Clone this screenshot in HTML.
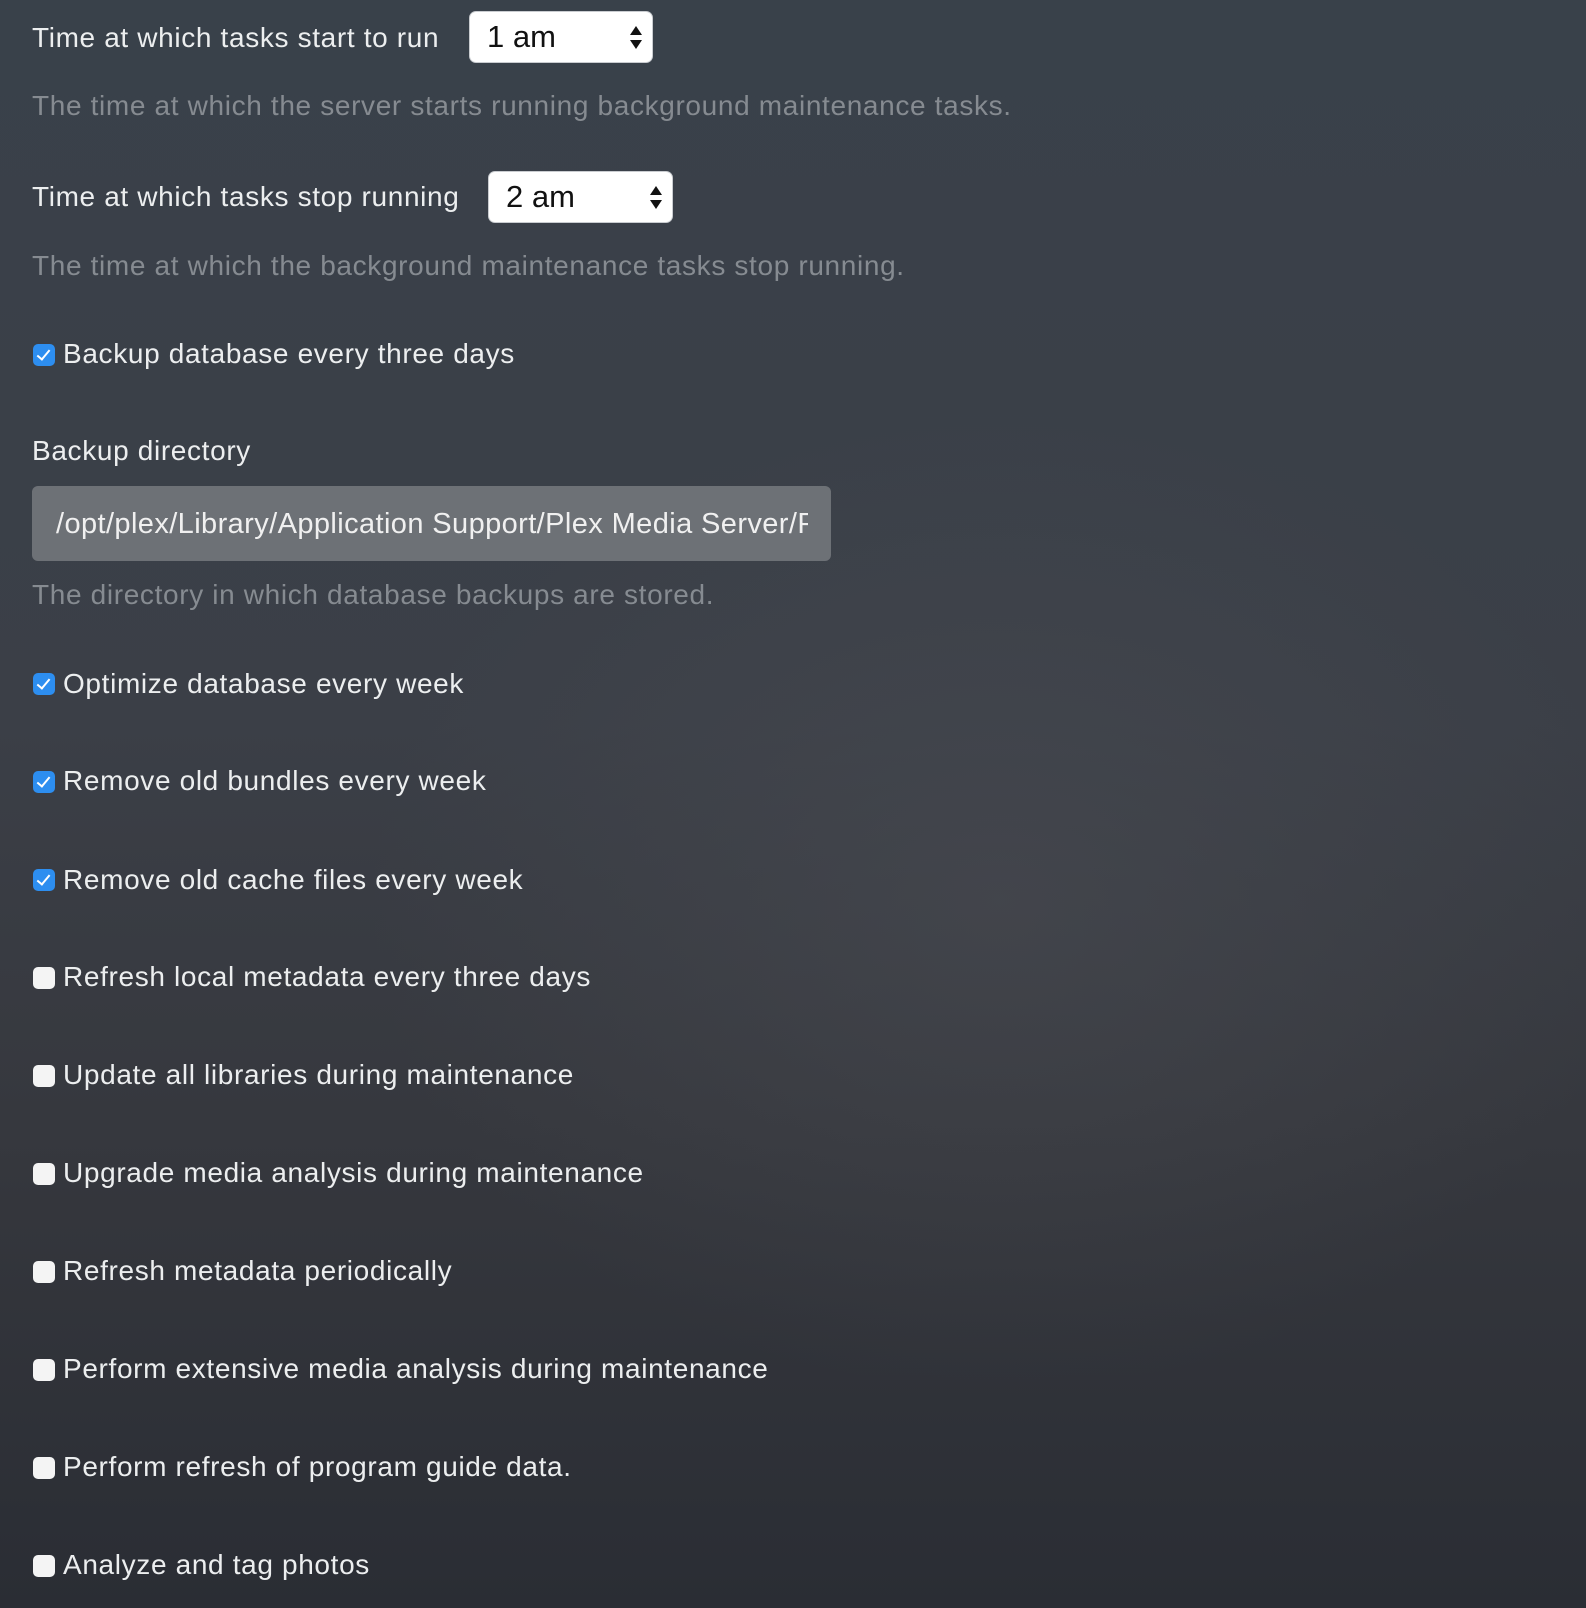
<!DOCTYPE html>
<html><head><meta charset="utf-8"><style>
html,body{margin:0;padding:0}
body{width:1586px;height:1608px;overflow:hidden;position:relative;font-family:"Liberation Sans",sans-serif;
background:radial-gradient(ellipse 900px 700px at 1000px 900px,rgba(80,82,88,0.4),rgba(0,0,0,0) 70%),linear-gradient(180deg,#39414a 0%,#3b3f47 45%,#36383e 70%,#2a2d34 100%);}
.t{position:absolute;left:32px;color:#eceeef;font-size:28px;letter-spacing:0.65px;line-height:30px;white-space:nowrap}
.d{color:#868b91}
.sel{position:absolute;height:52px;background:#fff;border:1px solid #c9ccd0;border-radius:7px;box-sizing:border-box;color:#111;font-size:31px;line-height:50px;padding-left:17px}
.sel:after{content:"";position:absolute;right:10px;top:14px;border:6px solid transparent;border-bottom:9px solid #111;border-top:0}
.sel:before{content:"";position:absolute;right:10px;top:28px;border:6px solid transparent;border-top:9px solid #111;border-bottom:0}
.cb{position:absolute;left:33px;width:22px;height:22px;border-radius:5px;background:#f4f4f4}
.cb.on{background:#2d8ef0}
.cb.on:after{content:"";position:absolute;left:7px;top:3px;width:5px;height:11px;border:solid #fff;border-width:0 2px 2px 0;transform:rotate(40deg)}
.inp{position:absolute;left:32px;top:486px;width:799px;height:75px;background:#6d7176;border-radius:6px}
.inp span{position:absolute;left:24px;top:0;width:752px;overflow:hidden;color:#f0f0f0;font-size:29px;letter-spacing:0.4px;line-height:77px;white-space:nowrap}
</style></head><body>
<div class="t" style="top:23px">Time at which tasks start to run</div>
<div class="sel" style="left:469px;top:11px;width:184px">1 am</div>
<div class="t d" style="top:91px">The time at which the server starts running background maintenance tasks.</div>
<div class="t" style="top:182px">Time at which tasks stop running</div>
<div class="sel" style="left:488px;top:171px;width:185px">2 am</div>
<div class="t d" style="top:251px">The time at which the background maintenance tasks stop running.</div>
<div class="cb on" style="top:344px"></div><div class="t" style="left:63px;top:339px">Backup database every three days</div>
<div class="t" style="top:436px">Backup directory</div>
<div class="inp"><span>/opt/plex/Library/Application Support/Plex Media Server/Plug-in Support</span></div>
<div class="t d" style="top:580px">The directory in which database backups are stored.</div>
<div class="cb on" style="top:673px"></div><div class="t" style="left:63px;top:669px">Optimize database every week</div>
<div class="cb on" style="top:771px"></div><div class="t" style="left:63px;top:766px">Remove old bundles every week</div>
<div class="cb on" style="top:869px"></div><div class="t" style="left:63px;top:865px">Remove old cache files every week</div>
<div class="cb" style="top:967px"></div><div class="t" style="left:63px;top:962px">Refresh local metadata every three days</div>
<div class="cb" style="top:1065px"></div><div class="t" style="left:63px;top:1060px">Update all libraries during maintenance</div>
<div class="cb" style="top:1163px"></div><div class="t" style="left:63px;top:1158px">Upgrade media analysis during maintenance</div>
<div class="cb" style="top:1261px"></div><div class="t" style="left:63px;top:1256px">Refresh metadata periodically</div>
<div class="cb" style="top:1359px"></div><div class="t" style="left:63px;top:1354px">Perform extensive media analysis during maintenance</div>
<div class="cb" style="top:1457px"></div><div class="t" style="left:63px;top:1452px">Perform refresh of program guide data.</div>
<div class="cb" style="top:1555px"></div><div class="t" style="left:63px;top:1550px">Analyze and tag photos</div>
</body></html>
